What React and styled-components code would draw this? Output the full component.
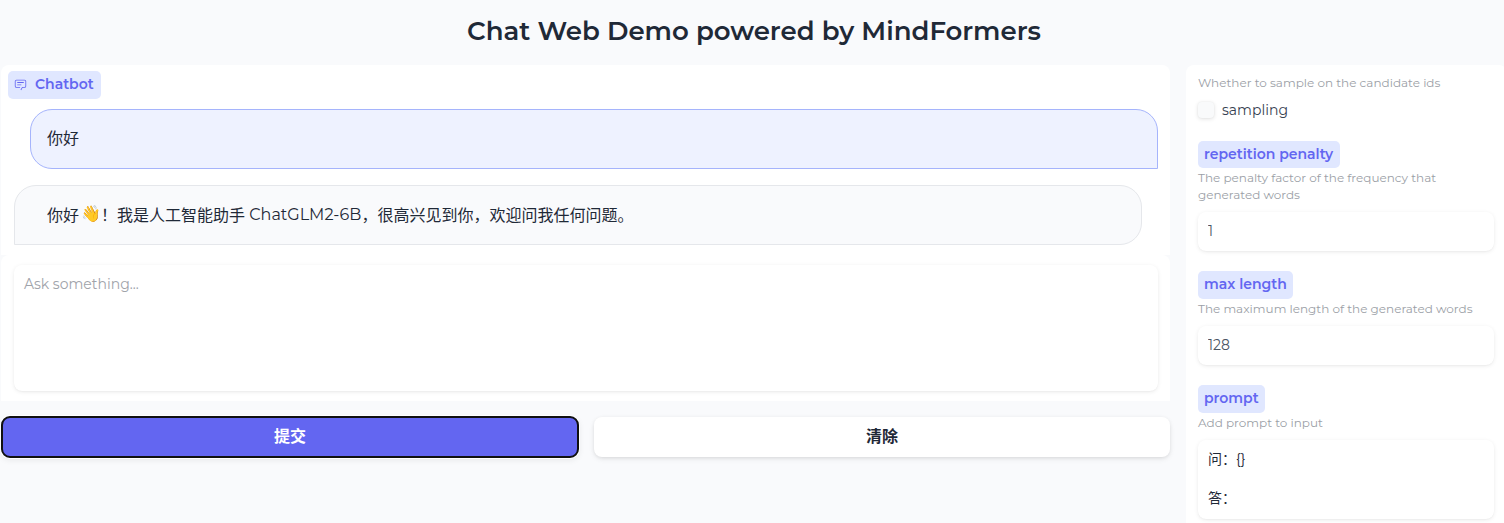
import React from 'react';
import styled, { createGlobalStyle } from 'styled-components';

const Global = createGlobalStyle`
  * { box-sizing: border-box; }
  html, body { margin: 0; background: #f9fafc; }
  body {
    height: 523px;
    overflow: hidden;
    color: #1f2937;
    font-family: Montserrat, Inter, "Noto Sans CJK SC", sans-serif;
    font-size: 16px;
  }
  button, textarea, input { font: inherit; }
`;

const Page = styled.main`
  width: 1507px;
  height: 523px;
  overflow: hidden;
  padding-left: 1px;
`;

const Title = styled.h1`
  margin: 0;
  height: 65px;
  padding-top: 12px;
  text-align: center;
  font-size: 26px;
  line-height: 38px;
  font-weight: 600;
`;

const Columns = styled.div`
  display: flex;
  gap: 16px;
  align-items: flex-start;
`;

const ChatColumn = styled.section`
  width: 1169px;
  flex: none;
`;

const ChatPanel = styled.div`
  height: 190px;
  padding: 6px 12px 0 7px;
  background: #fff;
  border-radius: 8px 8px 0 0;
`;

const Label = styled.span`
  display: inline-flex;
  align-items: center;
  width: ${(p) => p.$w}px;
  height: ${(p) => p.$h || 28}px;
  padding: 0 6px ${(p) => (p.$h === 27 ? 1 : 2)}px;
  border-radius: 5px;
  background: #e0e7ff;
  color: #6366f1;
  font-size: 14px;
  line-height: 26px;
  font-weight: 600;
  vertical-align: top;
  white-space: nowrap;

  svg { margin: 1px 8px 0 0; flex: none; }
`;

const Messages = styled.div`
  display: flex;
  flex-direction: column;
  gap: 16px;
  padding: 10px 0 0 6px;
`;

const Bubble = styled.div`
  width: 1128px;
  height: 60px;
  display: flex;
  align-items: center;
  border: 1px solid ${(p) => (p.$user ? '#a5b4fc' : '#e5e7eb')};
  background: ${(p) => (p.$user ? '#eef2ff' : '#f9fafc')};
  border-radius: ${(p) => (p.$user ? '22px 22px 0 22px' : '22px 22px 22px 0')};
  margin-left: ${(p) => (p.$user ? 16 : 0)}px;
  padding: 0 0 ${(p) => (p.$user ? '4px 16px' : '3px 32px')};
  padding: 0 0 ${(p) => (p.$user ? 4 : 3)}px ${(p) => (p.$user ? 16 : 32)}px;
  white-space: pre;
`;

const Emoji = styled.span`
  display: inline-flex;
  width: 22px;
  padding-left: 1px;
  justify-content: center;
`;

const ModelName = styled.span`
  padding: 1px 0 0;
`;

const AskPanel = styled.div`
  height: 146px;
  padding: 10px 12px 0 13px;
  background: #fff;
  border-radius: 8px 8px 0 0;
`;

const Field = styled.textarea`
  display: block;
  width: 100%;
  height: ${(p) => p.$h}px;
  margin: 0;
  padding: ${(p) => p.$pt ?? 10}px 10px ${(p) => p.$pb || 0}px;
  border: 0;
  outline: 0;
  resize: none;
  overflow: hidden;
  border-radius: 8px;
  background: #fff;
  color: ${(p) => p.$color || '#1f2937'};
  box-shadow: 0 1px 4px 0 rgba(0, 0, 0, 0.08), 0 1px 2px -1px rgba(0, 0, 0, 0.08);
  font-size: 14px;
  line-height: 19.6px;

  &::placeholder { color: #a0a3aa; opacity: 1; }
`;

const Actions = styled.div`
  display: flex;
  gap: 16px;
  padding: 16px 0 0 1px;
`;

const Button = styled.button`
  width: 576px;
  height: 40px;
  padding: 0 0 4px;
  border: 0;
  border-radius: 8px;
  font-size: 16px;
  font-weight: 600;
  background: ${(p) => (p.$primary ? '#6366f1' : '#fff')};
  color: ${(p) => (p.$primary ? '#fff' : '#1f2937')};
  box-shadow: ${(p) =>
    p.$primary
      ? '0 0 0 2px #fff, 0 2px 6px 1px rgba(0,0,0,.08)'
      : '0 2px 6px -1px rgba(0,0,0,.1), 0 1px 4px -1px rgba(0,0,0,.1)'};
  ${(p) => p.$primary && 'outline: 2px solid #101010; outline-offset: -1px;'}
`;

const Settings = styled.aside`
  width: 321px;
  flex: none;
  height: 470px;
  padding: 9px 13px 0 12px;
  border-radius: 8px;
  background: #fff;
`;

const Info = styled.div`
  height: ${(p) => p.$h || 17}px;
  color: #9c9fa7;
  font-size: 12px;
  line-height: 17px;
  white-space: nowrap;
`;

const Check = styled.label`
  display: flex;
  align-items: center;
  gap: 8px;
  margin: 9px 0 21px;
  height: 20px;
  font-size: 14px;
  color: #374151;
`;

const Box = styled.span`
  width: 16px;
  height: 16px;
  border-radius: 4px;
  background: #f9fafb;
  box-shadow: 0 1px 4px rgba(0, 0, 0, 0.12), 0 0 2px rgba(0, 0, 0, 0.06);
`;

const Group = styled.div`
  display: flex;
  flex-direction: column;
  align-items: flex-start;
  margin-bottom: 20px;

  ${Info} { margin: 1px 0 9px; }
`;

const ChatIcon = () => (
  <svg width="13" height="13" viewBox="0 0 32 32" fill="#6366f1">
    <path d="M17.74 30 16 29l4-7h6a2 2 0 0 0 2-2V8a2 2 0 0 0-2-2H6a2 2 0 0 0-2 2v12a2 2 0 0 0 2 2h9v2H6a4 4 0 0 1-4-4V8a4 4 0 0 1 4-4h20a4 4 0 0 1 4 4v12a4 4 0 0 1-4 4h-4.84Z" />
    <path d="M8 10h16v2H8zM8 16h10v2H8z" />
  </svg>
);

export default function App() {
  return (
    <Page>
      <Global />
      <Title>Chat Web Demo powered by MindFormers</Title>
      <Columns>
        <ChatColumn>
          <ChatPanel>
            <Label $w={93}><ChatIcon />Chatbot</Label>
            <Messages>
              <Bubble $user>你好</Bubble>
              <Bubble>
                你好<Emoji>👋</Emoji>！我是人工智能助手 <ModelName>ChatGLM2-6B</ModelName>，很高兴见到你，欢迎问我任何问题。
              </Bubble>
            </Messages>
          </ChatPanel>
          <AskPanel>
            <Field $h={126} placeholder="Ask something..." />
          </AskPanel>
          <Actions>
            <Button $primary>提交</Button>
            <Button>清除</Button>
          </Actions>
        </ChatColumn>
        <Settings>
          <Info>Whether to sample on the candidate ids</Info>
          <Check><Box />sampling</Check>
          <Group>
            <Label $w={142} $h={27}>repetition penalty</Label>
            <Info $h={34}>
              The penalty factor of the frequency that<br />
              generated words
            </Info>
            <Field as="input" $h={39} $pt={0} $pb={1} $color="#4b5563" defaultValue="1" />
          </Group>
          <Group>
            <Label $w={95}>max length</Label>
            <Info>The maximum length of the generated words</Info>
            <Field as="input" $h={39} $pt={0} $pb={1} $color="#4b5563" defaultValue="128" />
          </Group>
          <Group>
            <Label $w={67}>prompt</Label>
            <Info>Add prompt to input</Info>
            <Field $h={79} defaultValue={'问：{}\n\n答：'} />
          </Group>
        </Settings>
      </Columns>
    </Page>
  );
}
